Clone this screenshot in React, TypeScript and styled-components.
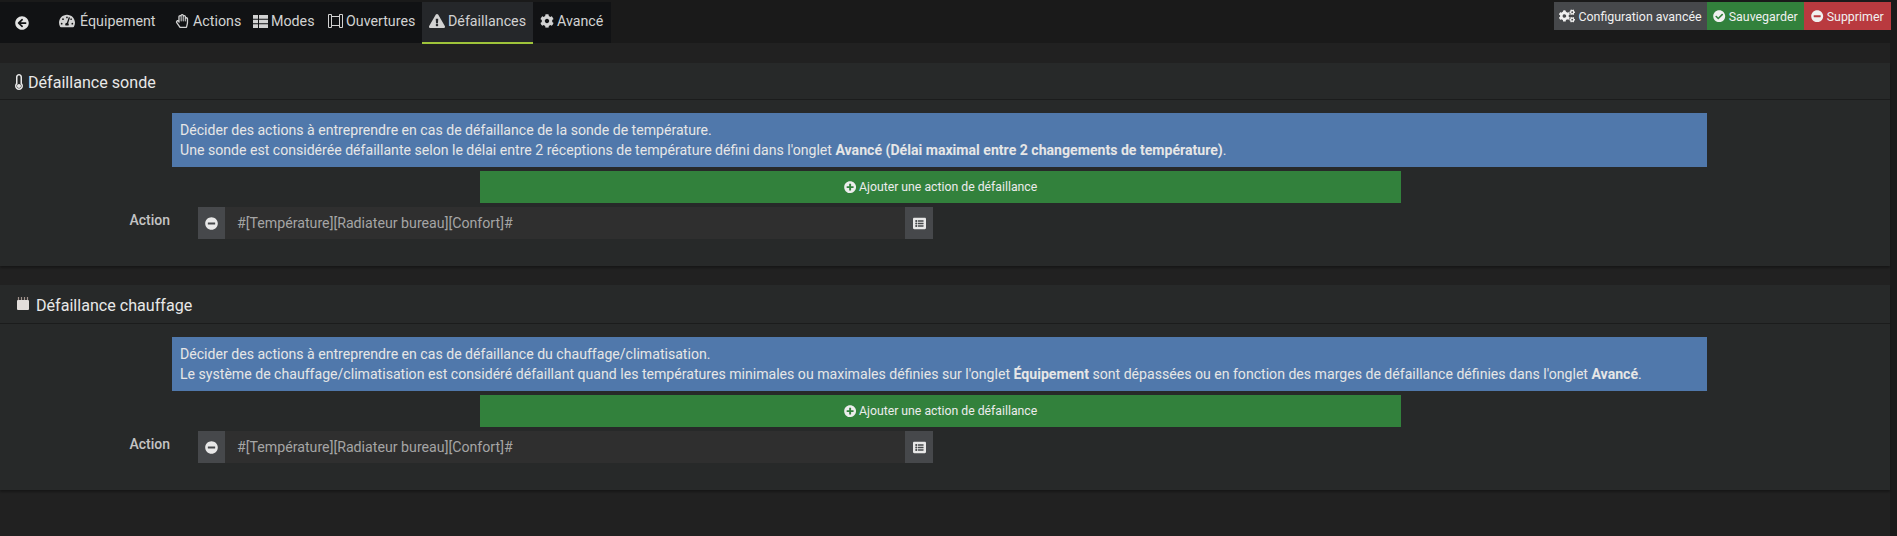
import React from 'react';
import styled, { createGlobalStyle } from 'styled-components';
import {
  FaArrowCircleLeft,
  FaCheckCircle,
  FaCog,
  FaCogs,
  FaExclamationTriangle,
  FaListAlt,
  FaMinusCircle,
  FaPlusCircle,
  FaRegHandPaper,
  FaTachometerAlt,
  FaThermometerEmpty,
} from 'react-icons/fa';

const GlobalStyle = createGlobalStyle`
  html, body {
    margin: 0;
    padding: 0;
    background: #1a1a1a;
  }
  body {
    font-family: Roboto, "Liberation Sans", sans-serif;
    color: #dcdcdc;
  }
`;

const WindowIcon = () => (
  <svg width="15" height="14" viewBox="0 0 15 14" fill="none" stroke="currentColor" strokeWidth="1">
    <path d="M.5 .5h3v13h-3zM11.5 .5h3v13h-3zM3.5 2.5h8M3.5 11.5h8" />
  </svg>
);

const ModesIcon = () => (
  <svg width="15" height="13" viewBox="0 0 15 13" fill="currentColor">
    <path d="M0 0h5v3.7H0zM6 0h9v3.7H6zM0 4.7h5v3.6H0zM6 4.7h9v3.6H6zM0 9.3h5V13H0zM6 9.3h9V13H6z" />
  </svg>
);

const HeaterIcon = () => (
  <svg width="12" height="13" viewBox="0 0 12 13">
    <rect x="0" y="3" width="12" height="10" rx="1" fill="#e2dedb" />
    <path d="M1.5 0v3M4.5 0v3M7.5 0v3M10.5 0v3" stroke="#a0928c" strokeWidth="1.2" />
  </svg>
);

const tabs = [
  { label: 'Équipement', icon: <FaTachometerAlt size={16} />, width: 124, inset: 14, gap: 5 },
  { label: 'Actions', icon: <FaRegHandPaper />, width: 77, inset: 6, gap: 4 },
  { label: 'Modes', icon: <ModesIcon />, width: 75, inset: 7, gap: 3 },
  { label: 'Ouvertures', icon: <WindowIcon />, width: 101, inset: 7, gap: 3 },
  { label: 'Défaillances', icon: <FaExclamationTriangle size={16} />, width: 111, inset: 7, gap: 3, active: true },
  { label: 'Avancé', icon: <FaCog />, width: 78, inset: 7, gap: 3 },
];

const ActionRow: React.FC = () => (
  <Row>
    <RowLabel>Action</RowLabel>
    <RemoveButton>
      <FaMinusCircle />
    </RemoveButton>
    <ActionInput>#[Température][Radiateur bureau][Confort]#</ActionInput>
    <ListButton>
      <FaListAlt />
    </ListButton>
  </Row>
);

const App: React.FC = () => (
  <Page>
    <GlobalStyle />
    <TopBar>
      <TabList>
        <BackTab>
          <FaArrowCircleLeft />
        </BackTab>
        {tabs.map((tab) => (
          <Tab key={tab.label} $width={tab.width} $inset={tab.inset} $gap={tab.gap} $active={!!tab.active}>
            {tab.icon}
            {tab.label}
          </Tab>
        ))}
      </TabList>
      <Actions>
        <TopButton $color="#46484b" $width={153}>
          <FaCogs size={16} />
          Configuration avancée
        </TopButton>
        <TopButton $color="#32813c" $width={97}>
          <FaCheckCircle />
          Sauvegarder
        </TopButton>
        <TopButton $color="#b93a3f" $width={87}>
          <FaMinusCircle />
          Supprimer
        </TopButton>
      </Actions>
    </TopBar>

    <Content>
      <Panel $height={203}>
        <PanelHeader $height={37} $inset={16}>
          <ThermoIcon>
            <FaThermometerEmpty />
          </ThermoIcon>
          Défaillance sonde
        </PanelHeader>
        <PanelBody>
          <Alert>
            Décider des actions à entreprendre en cas de défaillance de la sonde de température.
            <br />
            Une sonde est considérée défaillante selon le délai entre 2 réceptions de température défini dans
            l'onglet <b>Avancé (Délai maximal entre 2 changements de température)</b>.
          </Alert>
          <AddButton>
            <FaPlusCircle />
            Ajouter une action de défaillance
          </AddButton>
          <ActionRow />
        </PanelBody>
      </Panel>

      <Panel $height={205}>
        <PanelHeader $height={39} $inset={17}>
          <HeaterSlot>
            <HeaterIcon />
          </HeaterSlot>
          <HeaterTitle>Défaillance chauffage</HeaterTitle>
        </PanelHeader>
        <PanelBody>
          <Alert>
            Décider des actions à entreprendre en cas de défaillance du chauffage/climatisation.
            <br />
            Le système de chauffage/climatisation est considéré défaillant quand les températures minimales ou
            maximales définies sur l'onglet <b>Équipement</b> sont dépassées ou en fonction des marges de
            défaillance définies dans l'onglet <b>Avancé</b>.
          </Alert>
          <AddButton>
            <FaPlusCircle />
            Ajouter une action de défaillance
          </AddButton>
          <ActionRow />
        </PanelBody>
      </Panel>
    </Content>
  </Page>
);

const Page = styled.div`
  width: 1897px;
  height: 536px;
  overflow: hidden;
  background: #1a1a1a;
`;

const TopBar = styled.div`
  display: flex;
  justify-content: space-between;
  align-items: flex-start;
  height: 43px;
  padding: 2px 6px 0 0;
  box-sizing: border-box;
`;

const TabList = styled.div`
  display: flex;
  height: 41px;
  background: #111214;
`;

const BackTab = styled.div`
  display: flex;
  align-items: center;
  width: 45px;
  padding-left: 15px;
  box-sizing: border-box;
  font-size: 14px;
  color: #e4e4e4;
`;

const Tab = styled.div<{ $width: number; $inset: number; $gap: number; $active: boolean }>`
  position: relative;
  z-index: 1;
  display: flex;
  align-items: center;
  gap: ${(p) => p.$gap}px;
  width: ${(p) => p.$width}px;
  height: 42px;
  padding: 0 0 2px ${(p) => p.$inset}px;
  box-sizing: border-box;
  font-size: 14.25px;
  color: #d2d2d2;
  background: ${(p) => (p.$active ? '#25272a' : 'transparent')};
  border-bottom: 2px solid ${(p) => (p.$active ? '#9fc43a' : 'transparent')};

  svg {
    flex: none;
    font-size: 14px;
  }
`;

const Actions = styled.div`
  display: flex;
`;

const TopButton = styled.div<{ $color: string; $width: number }>`
  display: flex;
  align-items: center;
  justify-content: center;
  gap: 3px;
  width: ${(p) => p.$width}px;
  height: 28px;
  font-size: 12.4px;
  color: #f0f0f0;
  background: ${(p) => p.$color};
`;

const Content = styled.main`
  display: flex;
  flex-direction: column;
  gap: 19px;
  width: 1890px;
  height: 493px;
  padding-top: 20px;
  box-sizing: border-box;
  background: #212121;
`;

const Panel = styled.section<{ $height: number }>`
  height: ${(p) => p.$height}px;
  flex: none;
  background: #272929;
  box-shadow: 0 2px 2px rgba(0, 0, 0, 0.3);
`;

const PanelHeader = styled.header<{ $height: number; $inset: number }>`
  display: flex;
  align-items: center;
  gap: 3px;
  height: ${(p) => p.$height}px;
  padding: 2px 0 0 ${(p) => p.$inset}px;
  box-sizing: border-box;
  font-size: 16.1px;
  color: #e8e8e8;
  border-bottom: 1px solid #1b1c1c;
`;

const ThermoIcon = styled.span`
  display: flex;
  margin-left: -5px;
  margin-right: -2px;
  font-size: 16px;
`;

const HeaterSlot = styled.span`
  display: flex;
  margin-top: -4px;
`;

const HeaterTitle = styled.span`
  margin-left: 4px;
`;

const PanelBody = styled.div`
  display: flex;
  flex-direction: column;
  gap: 4px;
  padding-top: 13px;
`;

const Alert = styled.div`
  width: 1535px;
  height: 54px;
  margin-left: 172px;
  padding: 7px 8px;
  box-sizing: border-box;
  font-size: 14.1px;
  line-height: 20px;
  color: #e6e6e6;
  background: #5078ab;
`;

const AddButton = styled.div`
  display: flex;
  align-items: center;
  justify-content: center;
  gap: 3px;
  width: 921px;
  height: 32px;
  margin-left: 480px;
  font-size: 12.25px;
  color: #ececec;
  background: #32813c;
`;

const Row = styled.div`
  display: flex;
  height: 32px;
`;

const RowLabel = styled.div`
  width: 198px;
  padding: 5px 28px 0 0;
  box-sizing: border-box;
  text-align: right;
  font-size: 14px;
  font-weight: 500;
  color: #c4c4c4;
`;

const RemoveButton = styled.div`
  display: flex;
  align-items: center;
  justify-content: center;
  width: 27px;
  font-size: 13px;
  color: #e8e8e8;
  background: #46484b;
`;

const ActionInput = styled.div`
  display: flex;
  align-items: center;
  width: 680px;
  padding-left: 12px;
  box-sizing: border-box;
  font-size: 14.2px;
  color: #a5a5a5;
  background: #2f2f2f;
`;

const ListButton = styled.div`
  display: flex;
  align-items: center;
  justify-content: center;
  width: 28px;
  font-size: 13px;
  color: #e8e8e8;
  background: #46484b;
`;

export default App;
